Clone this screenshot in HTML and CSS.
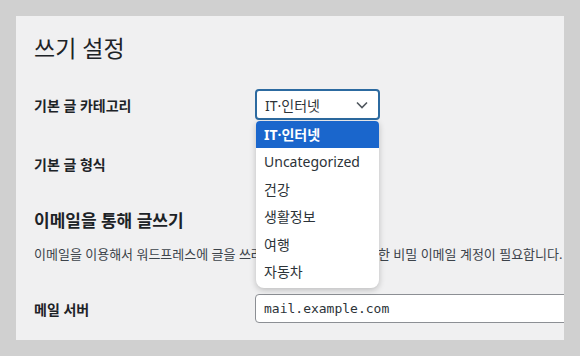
FILE: index.html
```html
<!DOCTYPE html>
<html lang="ko">
<head>
    <meta charset="UTF-8">
    <meta name="viewport" content="width=device-width, initial-scale=1.0">
    <title>쓰기 설정</title>
    <link rel="stylesheet" href="styles.css">
</head>
<body>
    <div class="panel">
        <h1>쓰기 설정</h1>

        <div class="form-row row-category">
            <label class="field-label">기본 글 카테고리</label>
            <div class="select-wrap">
                <div class="select-box">
                    <span>IT·인터넷</span>
                    <svg class="chevron" width="12" height="8" viewBox="0 0 12 8"><path d="M1 1.5 L6 6.5 L11 1.5" fill="none" stroke="#50575e" stroke-width="1.6"/></svg>
                </div>
                <ul class="dropdown">
                    <li class="selected">IT·인터넷</li>
                    <li>Uncategorized</li>
                    <li>건강</li>
                    <li>생활정보</li>
                    <li>여행</li>
                    <li>자동차</li>
                </ul>
            </div>
        </div>

        <div class="form-row row-format">
            <label class="field-label">기본 글 형식</label>
        </div>

        <h2>이메일을 통해 글쓰기</h2>
        <p class="desc">이메일을 이용해서 워드프레스에 글을 쓰려면 POP3 접근이 가능한 비밀 이메일 계정이 필요합니다.</p>

        <div class="form-row row-server">
            <label class="field-label">메일 서버</label>
            <div class="text-input">mail.example.com</div>
        </div>
    </div>
</body>
</html>
```

FILE: styles.css
```css
body {
    margin: 0;
    padding: 16px;
    background-color: #d0d0d0;
    font-family: "Noto Sans", "Noto Sans CJK KR", sans-serif;
    color: #1d2327;
}
.panel {
    background-color: #f0f0f1;
    height: 324px;
    padding: 0 0 0 18px;
    overflow: hidden;
    box-sizing: border-box;
}
h1 {
    margin: 0;
    padding-top: 16px;
    font-size: 23px;
    font-weight: 400;
    line-height: 32px;
}
h2 {
    margin: 30px 0 0;
    font-size: 17px;
    font-weight: 700;
    line-height: 24px;
}
.form-row {
    display: flex;
    align-items: center;
}
.field-label {
    width: 221px;
    font-size: 14px;
    font-weight: 700;
    flex-shrink: 0;
}
.row-category {
    margin-top: 25px;
    height: 31px;
}
.row-format {
    margin-top: 28px;
    height: 31px;
}
.desc {
    margin: 11px 0 0;
    font-size: 13px;
    line-height: 20px;
    color: #3c434a;
    white-space: nowrap;
}
.row-server {
    margin-top: 30px;
    height: 29px;
}
.select-wrap {
    position: relative;
}
.select-box {
    width: 125px;
    height: 31px;
    box-sizing: border-box;
    border: 2px solid #2c6aa0;
    border-radius: 4px;
    background-color: #fff;
    display: flex;
    align-items: center;
    justify-content: space-between;
    padding: 0 8px;
    font-size: 14px;
    color: #2c3338;
}
.chevron {
    margin-right: 2px;
}
.dropdown {
    position: absolute;
    top: 32px;
    left: 1px;
    width: 123px;
    margin: 0;
    padding: 0 0 3px;
    list-style: none;
    background-color: #fff;
    border-radius: 4px 4px 8px 8px;
    box-shadow: 0 2px 6px rgba(0, 0, 0, 0.22);
    z-index: 2;
}
.dropdown li {
    height: 27.4px;
    line-height: 27.4px;
    padding-left: 8px;
    font-size: 14px;
    color: #2c3338;
}
.dropdown li.latin {
    font-size: 13.5px;
}
.dropdown li.selected {
    background-color: #1a66cc;
    color: #fff;
    font-weight: 700;
    border-radius: 4px 4px 0 0;
}
.text-input {
    width: 340px;
    height: 29px;
    box-sizing: border-box;
    border: 1px solid #8c8f94;
    border-radius: 4px;
    background-color: #fff;
    padding: 0 8px;
    line-height: 27px;
    font-family: "DejaVu Sans Mono", monospace;
    font-size: 13px;
    color: #2c3338;
    flex-shrink: 0;
}
```
